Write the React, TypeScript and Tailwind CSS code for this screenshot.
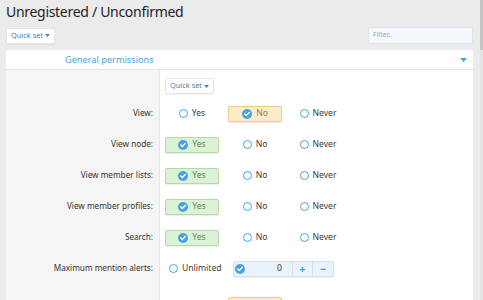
import React from "react";

type Choice = "yes" | "no" | "never";

const rows: { label: string; value: Choice }[] = [
  { label: "View:", value: "no" },
  { label: "View node:", value: "yes" },
  { label: "View member lists:", value: "yes" },
  { label: "View member profiles:", value: "yes" },
  { label: "Search:", value: "yes" },
];

function CheckIcon() {
  return (
    <svg width="10" height="10" viewBox="0 0 10 10" className="shrink-0">
      <circle cx="5" cy="5" r="5" fill="#47a3e0" />
      <path d="M2.8 5.1l1.5 1.5 2.9-3" fill="none" stroke="#fff" strokeWidth="1.4" strokeLinecap="round" strokeLinejoin="round" />
    </svg>
  );
}

function RadioIcon() {
  return <span className="w-[9px] h-[9px] rounded-full border-[1.5px] border-[#47a3e0] bg-white shrink-0" />;
}

function Option({ text, checked, tone }: { text: string; checked: boolean; tone: "green" | "orange" | "none" }) {
  const box =
    checked && tone === "green"
      ? "bg-[#dcf2d5] border-[#b3daa6] text-[#5b8a4f] shadow-[0_1px_1px_rgba(0,0,0,0.08)]"
      : checked && tone === "orange"
      ? "bg-[#fdeccb] border-[#f0c984] text-[#9c7a43] shadow-[0_1px_1px_rgba(0,0,0,0.08)]"
      : "border-transparent text-[#3b3b3b]";
  return (
    <div className={`w-[54px] h-[16px] flex items-center justify-center gap-[4px] rounded-[2px] border ${box}`}>
      {checked ? <CheckIcon /> : <RadioIcon />}
      <span className="text-[8.6px] leading-none">{text}</span>
    </div>
  );
}

function QuickSet() {
  return (
    <button className="h-[16px] px-[4px] bg-white border border-[#e2e6ea] rounded-[2px] text-[7.4px] text-[#4f83b5] flex items-center gap-[2px] shadow-[0_1px_1px_rgba(0,0,0,0.05)]">
      Quick set
      <svg width="5" height="3" viewBox="0 0 5 3"><path d="M0 0h5L2.5 3z" fill="#4f83b5" /></svg>
    </button>
  );
}

function Row({ label, children, height = "h-[31px]" }: { label: string; children?: React.ReactNode; height?: string }) {
  return (
    <div className={`flex ${height} shrink-0`}>
      <div className="w-[154px] shrink-0 bg-[#f5f5f5] border-r border-[#e6e6e6] flex items-center justify-end pr-[6px] text-[8.2px] text-[#333]">
        {label}
      </div>
      <div className="flex-1 flex items-center pl-[5px] gap-[9px]">{children}</div>
    </div>
  );
}

export default function App() {
  return (
    <div className="w-[483px] h-[300px] bg-[#ebebeb] overflow-hidden flex" style={{ fontFamily: '"Noto Sans", "Open Sans", sans-serif' }}>
      <div className="flex-1 pl-[6px] pr-[7px] flex flex-col">
        <h1 className="h-[20px] mt-[2px] text-[14px] leading-[20px] text-[#1d1d1d] tracking-[-0.3px]">Unregistered / Unconfirmed</h1>

        <div className="mt-[5px] h-[17px] flex items-center justify-between">
          <QuickSet />
          <div className="w-[105px] h-[17px] bg-[#f4f8fc] border border-[#dde3ea] rounded-[2px] flex items-center px-[4px] text-[7px] text-[#a0a4a8]">
            Filter..
          </div>
        </div>

        <div className="mt-[6px] bg-white rounded-t-[2px] flex-1 flex flex-col overflow-hidden">
          <div className="h-[20px] shrink-0 flex items-center border-b border-[#e5e5e5] pl-[59px] pr-[6px]">
            <span className="flex-1 text-[9.2px] text-[#47a3e0]">General permissions</span>
            <svg width="7" height="4" viewBox="0 0 7 4"><path d="M0 0h7L3.5 4z" fill="#47a3e0" /></svg>
          </div>

          <div className="flex h-[28px] shrink-0">
            <div className="w-[154px] shrink-0 bg-[#f5f5f5] border-r border-[#e6e6e6]" />
            <div className="flex-1 pl-[5px] pt-[8px]">
              <QuickSet />
            </div>
          </div>

          {rows.map((r) => (
            <Row key={r.label} label={r.label}>
              <Option text="Yes" checked={r.value === "yes"} tone="green" />
              <Option text="No" checked={r.value === "no"} tone="orange" />
              <Option text="Never" checked={r.value === "never"} tone="none" />
            </Row>
          ))}

          <Row label="Maximum mention alerts:">
            <div className="w-[54px] h-[15px] flex items-center gap-[4px] pl-[4px] text-[8.6px] text-[#3b3b3b]">
              <RadioIcon />
              <span className="leading-none">Unlimited</span>
            </div>
            <div className="ml-[5px] w-[101px] h-[16px] flex items-stretch border border-[#d6e1ee] rounded-[2px] bg-[#eaf3fc] text-[8.6px] shadow-[0_1px_1px_rgba(0,0,0,0.06)]">
              <div className="flex-1 flex items-center justify-between pl-[1px] pr-[10px]">
                <CheckIcon />
                <span className="text-[#333]">0</span>
              </div>
              <div className="w-[20px] border-l border-[#d6e1ee] flex items-center justify-center text-[#47a3e0] font-bold text-[11px] leading-none">+</div>
              <div className="w-[21px] border-l border-[#d6e1ee] flex items-center justify-center text-[#47a3e0] font-bold text-[11px] leading-none">−</div>
            </div>
          </Row>

          <Row label="" height="h-[5px]" />

          <Row label="">
            <Option text="Yes" checked={false} tone="green" />
            <Option text="No" checked={true} tone="orange" />
            <Option text="Never" checked={false} tone="none" />
          </Row>
        </div>
      </div>
      <div className="w-[3px] bg-[#e3e3e3] flex flex-col">
        <div className="h-[50px] bg-[#c4c4c4]" />
      </div>
    </div>
  );
}
